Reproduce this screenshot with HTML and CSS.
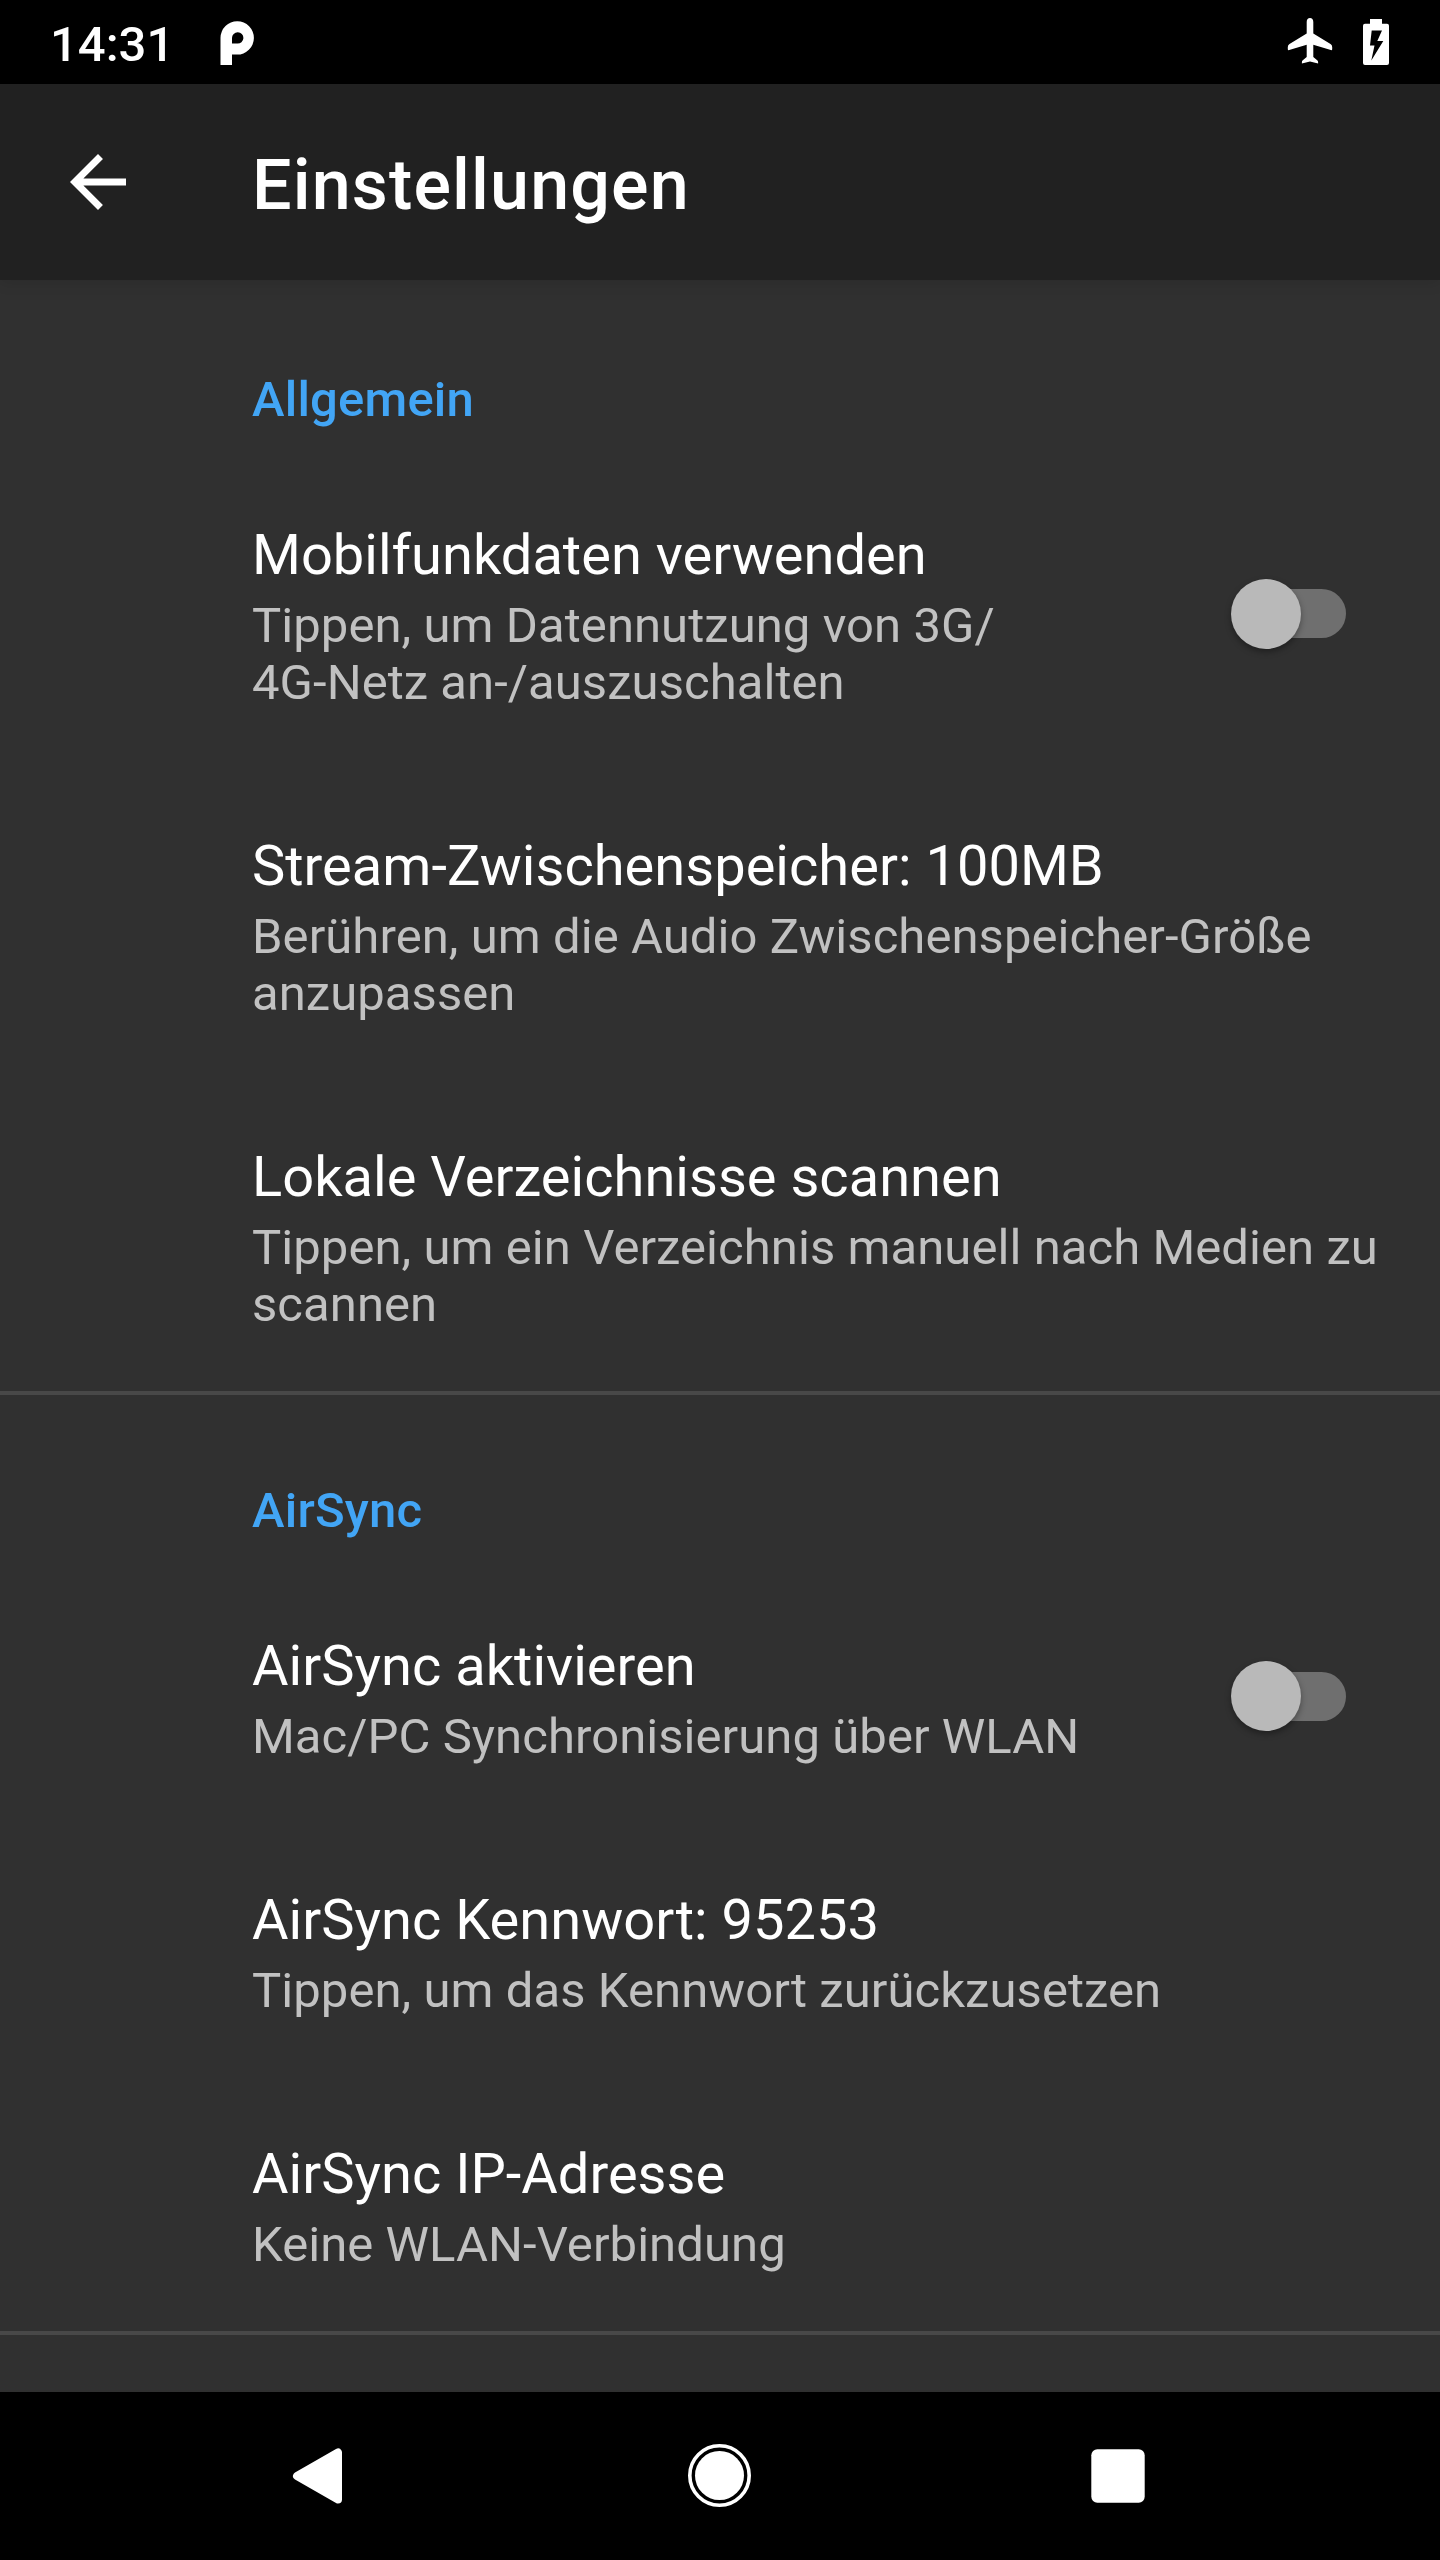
FILE: index.html
```html
<!DOCTYPE html>
<html lang="de">
<head>
<meta charset="utf-8">
<title>Einstellungen</title>
<link rel="stylesheet" href="styles.css">
</head>
<body>
<div class="screen">
  <div class="status-bar">
    <span class="clock">14:31</span>
    <svg class="status-p" viewBox="0 0 34 44"><path fill="#fff" fill-rule="evenodd" d="M.5 44V16.8A16.7 16.7 0 1 1 17 33.6H12V44zM12 22.6h5.2a5.7 5.7 0 1 0-5.2-5.6z"/></svg>
    <div class="status-right">
      <svg class="plane" viewBox="0 0 46 48"><path fill="#fff" d="M23 1c-2 0-3.300 1.600-3.300 4V16.500L2.500 27Q.800 28.200.800 30V32.300Q.900 33.500 2.200 33L19.700 27.800V40L15.800 43.200Q14.900 44 14.900 45V46.600L23 44.400L31.100 46.600V45Q31.100 44 30.200 43.200L26.300 40V27.800L43.800 33Q45.100 33.500 45.200 32.300V30Q45.200 28.200 43.500 27L26.300 16.500V5C26.300 2.600 25 1 23 1z"/></svg>
      <svg class="battery" viewBox="0 0 26 46"><path fill="#fff" fill-rule="evenodd" d="M7 0H19V4.700H24Q26 4.700 26 6.700V44Q26 46 24 46H2Q0 46 0 44V6.700Q0 4.700 2 4.700H7zM8.700 11.500L7 26.500H11.500L8.300 41.500L20.300 22H14.300L19 11.500z"/></svg>
    </div>
  </div>
  <header class="app-bar">
    <svg class="back" viewBox="0 0 24 24"><path fill="#fff" d="M20 11H7.830l5.590-5.590L12 4l-8 8 8 8 1.410-1.410L7.830 13H20v-2z"/></svg>
    <h1 class="app-title">Einstellungen</h1>
  </header>
  <main class="settings">
    <section class="group">
      <h2 class="category">Allgemein</h2>
      <div class="row">
        <div class="text">
          <div class="title">Mobilfunkdaten verwenden</div>
          <div class="summary">Tippen, um Datennutzung von 3G/<br>4G-Netz an-/auszuschalten</div>
        </div>
        <div class="switch"><div class="track"></div><div class="thumb"></div></div>
      </div>
      <div class="row">
        <div class="text">
          <div class="title">Stream-Zwischenspeicher: 100MB</div>
          <div class="summary">Berühren, um die Audio Zwischenspeicher-Größe<br>anzupassen</div>
        </div>
      </div>
      <div class="row">
        <div class="text">
          <div class="title">Lokale Verzeichnisse scannen</div>
          <div class="summary">Tippen, um ein Verzeichnis manuell nach Medien zu<br>scannen</div>
        </div>
      </div>
    </section>
    <section class="group">
      <h2 class="category">AirSync</h2>
      <div class="row">
        <div class="text">
          <div class="title">AirSync aktivieren</div>
          <div class="summary">Mac/PC Synchronisierung über WLAN</div>
        </div>
        <div class="switch"><div class="track"></div><div class="thumb"></div></div>
      </div>
      <div class="row">
        <div class="text">
          <div class="title">AirSync Kennwort: 95253</div>
          <div class="summary">Tippen, um das Kennwort zurückzusetzen</div>
        </div>
      </div>
      <div class="row">
        <div class="text">
          <div class="title">AirSync IP-Adresse</div>
          <div class="summary">Keine WLAN-Verbindung</div>
        </div>
      </div>
    </section>
    <section class="group"></section>
  </main>
  <nav class="nav-bar">
    <svg class="nav-icon" viewBox="0 0 64 64"><path fill="#fff" stroke="#fff" stroke-width="8" stroke-linejoin="round" d="M9 32L50 8.500V55.500z"/></svg>
    <svg class="nav-icon" viewBox="0 0 64 64"><circle cx="32.500" cy="31.500" r="29.700" fill="none" stroke="#fff" stroke-width="3.600"/><circle cx="32.500" cy="31.500" r="24.500" fill="#fff"/></svg>
    <svg class="nav-icon" viewBox="0 0 64 64"><rect x="5.300" y="5.300" width="53.400" height="53.400" rx="6" fill="#fff"/></svg>
  </nav>
</div>
</body>
</html>
```
FILE: styles.css
```css
* { box-sizing: border-box; }
body {
  margin: 0;
  background: #303030;
  color: #fff;
  font-family: Roboto, sans-serif;
}
.screen {
  display: flex;
  flex-direction: column;
  width: 1440px;
  height: 2560px;
  overflow: hidden;
}
.status-bar {
  display: flex;
  align-items: flex-start;
  height: 84px;
  padding: 0 51px 0 50px;
  background: #000;
}
.clock {
  width: 170px;
  padding-top: 16px;
  font-size: 49px;
  font-weight: 500;
  line-height: 57px;
}
.status-p { width: 34px; height: 44px; margin-top: 21px; }
.status-right { display: flex; gap: 30px; margin-left: auto; }
.plane { width: 46px; height: 48px; margin-top: 17px; }
.battery { width: 26px; height: 46px; margin-top: 19px; }
.app-bar {
  display: flex;
  align-items: center;
  flex: none;
  z-index: 1;
  height: 196px;
  padding-left: 56px;
  background: #212121;
  box-shadow: 0 2px 14px rgba(0, 0, 0, .12);
}
.back { width: 84px; height: 84px; margin-right: 112px; }
.app-title {
  margin: 6px 0 0;
  font-size: 70px;
  font-weight: 500;
  letter-spacing: 1.15px;
  line-height: 82px;
}
.settings { flex: 1; overflow: hidden; }
.group + .group { border-top: 4px solid #484848; }
.category {
  height: 178px;
  margin: 0;
  padding: 91px 0 0 252px;
  color: #42a5f5;
  font-size: 49px;
  font-weight: 500;
  letter-spacing: .2px;
  line-height: 57px;
}
.group + .group .category { height: 174px; padding-top: 87px; }
.row {
  display: flex;
  align-items: center;
  justify-content: space-between;
  padding: 64px 56px 58px 252px;
}
.text { flex: none; white-space: nowrap; }
.title { font-size: 56px; letter-spacing: .02px; line-height: 66px; }
.summary {
  margin-top: 9px;
  color: #c1c1c1;
  font-size: 49px;
  letter-spacing: .06px;
  line-height: 57px;
}
.switch {
  display: grid;
  align-items: center;
  width: 153px;
  height: 72px;
  margin: -9px 0 -3px;
}
.track {
  grid-area: 1 / 1;
  width: 98px;
  height: 49px;
  margin-left: 17px;
  border-radius: 25px;
  background: #6f6f6f;
}
.thumb {
  grid-area: 1 / 1;
  width: 70px;
  height: 70px;
  border-radius: 50%;
  background: #b9b9b9;
  box-shadow: 0 3px 6px rgba(0, 0, 0, .35);
}
.nav-bar {
  display: flex;
  flex: none;
  gap: 335px;
  height: 168px;
  padding: 52px 0 0 288px;
  background: #000;
}
.nav-icon { width: 64px; height: 64px; }
```
